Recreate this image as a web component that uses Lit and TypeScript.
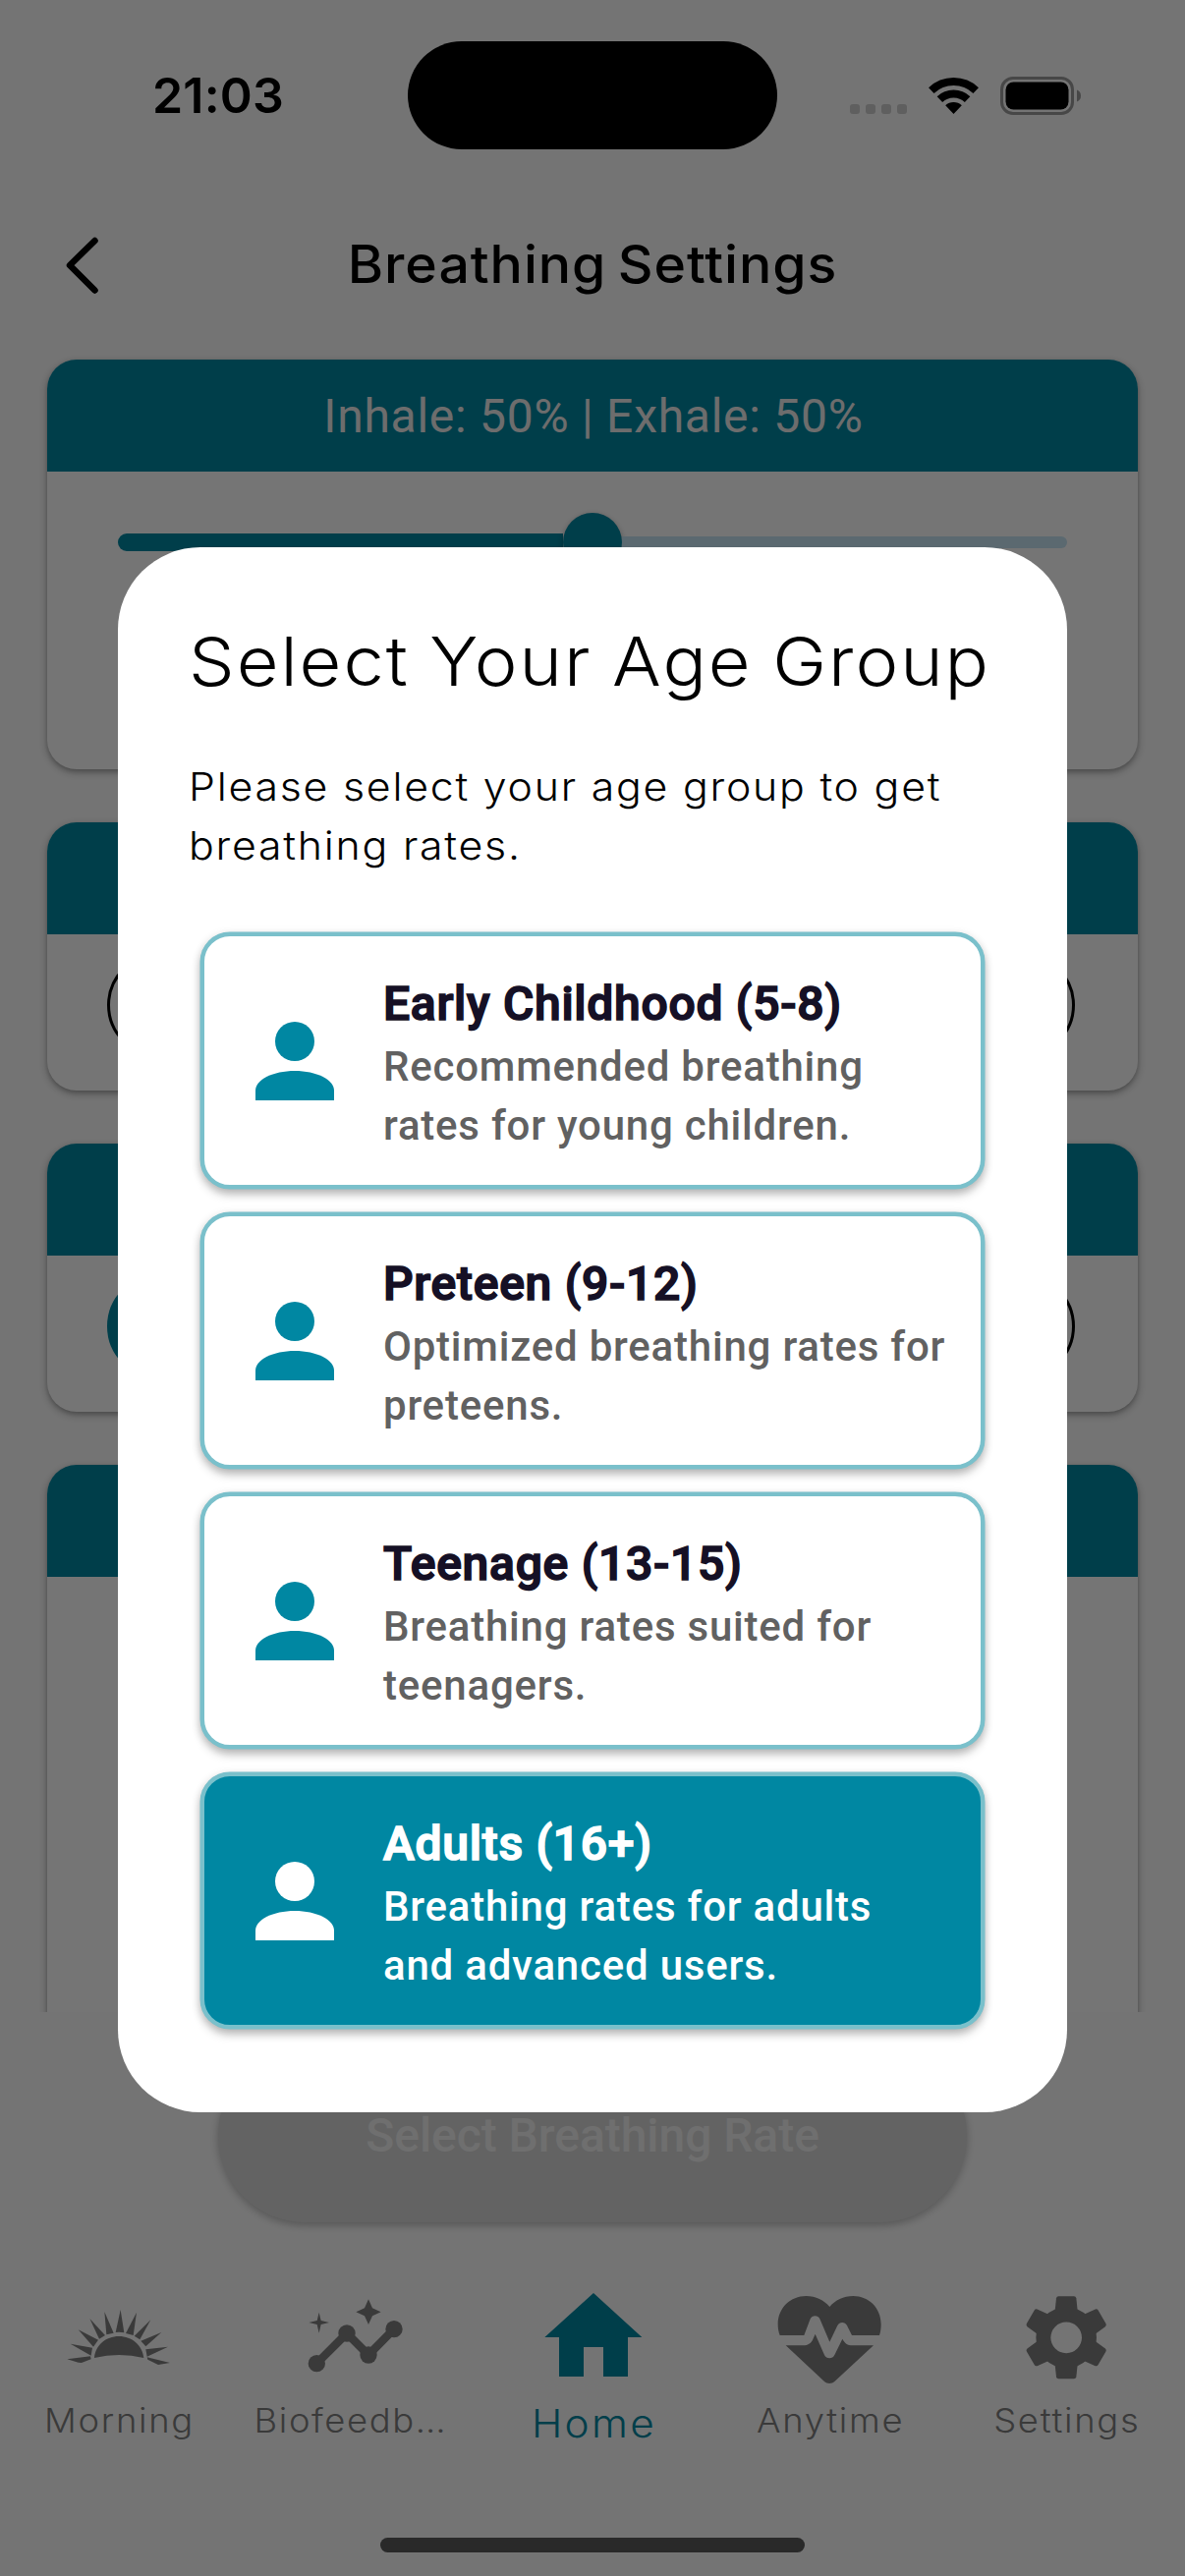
import { LitElement, html, css, svg } from "lit";
import { customElement, state } from "lit/decorators.js";
import { classMap } from "lit/directives/class-map.js";

interface AgeGroup {
  title: string;
  lines: [string, string];
}

const AGE_GROUPS: AgeGroup[] = [
  { title: "Early Childhood (5-8)", lines: ["Recommended breathing", "rates for young children."] },
  { title: "Preteen (9-12)", lines: ["Optimized breathing rates for", "preteens."] },
  { title: "Teenage (13-15)", lines: ["Breathing rates suited for", "teenagers."] },
  { title: "Adults (16+)", lines: ["Breathing rates for adults", "and advanced users."] },
];

const sunrise = svg`
  <path d="M137 210C140 172 172 144 212 144C252 144 284 172 288 210Q212 192 137 210Z"/>
  <path d="M54 214L125 205L127 214L98 225L88 224Z"/>
  <path d="M64 167L131 179L127 203Z"/>
  <path d="M88 124L149 155L134 176Z"/>
  <path d="M123 90L170 141L152 152Z"/>
  <path d="M168 69L196 134L174 139Z"/>
  <path d="M217 63L228 133Q215 130 202 132Z"/>
  <path d="M266 71L256 141L233 135Z"/>
  <path d="M309 94L276 154L259 143Z"/>
  <path d="M342 132L294 175L279 158Z"/>
  <path d="M362 176L298 206L294 184Z"/>
  <path d="M298 208L368 225L332 231L300 215Z"/>`;

const insights = svg`
  <path d="M816 227L908 135L974 201L1052 122" fill="none" stroke="currentColor" stroke-width="25"/>
  <circle cx="816" cy="227" r="26"/><circle cx="908" cy="135" r="26"/>
  <circle cx="974" cy="201" r="26"/><circle cx="1052" cy="122" r="26"/>
  <path d="M823 71L829 96L854 102L829 108L823 134L817 108L792 102L817 96Z"/>
  <path d="M974 31L986 58L1012 70L986 82L974 108L962 82L936 70L962 58Z"/>`;

const home = svg`<path d="M183 12L331 147H288V267H213V177H153V267H78V147H34Z"/>`;

const heartPulse = svg`
  <path d="M72 156C68 146 66 135 66 122C66 72 105 36 152 36C182 36 207 49 224 69C241 49 266 36 296 36C343 36 381 72 381 122C381 135 379 147 376 156H292L277 126C271 114 254 114 248 126L224 176L194 106C189 94 170 94 165 106L146 156Z"/>
  <path d="M90 187H142C160 187 168 178 172 170L180 152L208 216C214 229 233 229 239 216L263 167C270 180 278 187 294 187H358L240 296C230 305 217 305 207 296Z"/>`;

const gear = svg`
  <circle cx="946.5" cy="163" r="70" fill="none" stroke="currentColor" stroke-width="45"/>
  ${[0, 60, 120, 180, 240, 300].map(
    (a) => svg`<path transform="rotate(${a} 946.5 163)" d="M911 90L916 43Q917 37 923 37H970Q976 37 977 43L982 90Z"/>`
  )}`;

const NAV = [
  { label: "Morning", box: "32 0 360 330", icon: sunrise },
  { label: "Biofeedb…", box: "755 0 360 330", icon: insights, cut: true },
  { label: "Home", box: "0 0 360 330", icon: home, active: true },
  { label: "Anytime", box: "43 15 360 330", icon: heartPulse },
  { label: "Settings", box: "766 15 360 330", icon: gear },
];

@customElement("status-bar")
class StatusBar extends LitElement {
  static styles = css`
    :host {
      display: grid;
      grid-template-columns: 415px 376px 415px;
      align-items: center;
      height: 194px;
      color: #000;
    }
    .time {
      padding-left: 155px;
      font: 600 50px/60px Inter, sans-serif;
      letter-spacing: 0.2px;
    }
    .island { height: 110px; border-radius: 55px; background: #000; }
    .right { display: flex; align-items: center; padding-left: 74px; }
    .dots { display: flex; gap: 6px; margin-top: 28px; }
    .dots i { width: 10px; height: 10px; border-radius: 3px; background: #cfcfcf; }
    .wifi { margin-left: 22px; }
    .battery { margin-left: 22px; }
  `;
  render() {
    return html`
      <span class="time">21:03</span>
      <div class="island"></div>
      <div class="right">
        <div class="dots"><i></i><i></i><i></i><i></i></div>
        <svg class="wifi" width="51" height="37" viewBox="0 0 51 37">
          <path d="M2.8 13.1A33 33 0 0 1 48.2 13.1M11.4 22.1A20.5 20.5 0 0 1 39.6 22.1" fill="none" stroke="#000" stroke-width="8"/>
          <path d="M17.2 28.3A12 12 0 0 1 33.8 28.3L25.5 37Z"/>
        </svg>
        <svg class="battery" width="83" height="39" viewBox="0 0 83 39">
          <rect x="1.5" y="1.5" width="72" height="36" rx="11.5" fill="none" stroke="#9c9c9c" stroke-width="3"/>
          <rect x="5.5" y="5.5" width="64" height="28" rx="8"/>
          <path d="M78 13.5Q82 15 82 19.5T78 25.5Z" fill="#9c9c9c"/>
        </svg>
      </div>`;
  }
}

@customElement("settings-card")
class SettingsCard extends LitElement {
  static properties = { heading: {} };
  declare heading: string;
  static styles = css`
    :host {
      display: block;
      box-sizing: border-box;
      flex: none;
      border-radius: 30px;
      background: #fff;
      box-shadow: 0 3px 8px rgba(0, 0, 0, 0.3), 0 2px 4px rgba(0, 0, 0, 0.14);
    }
    .head {
      box-sizing: border-box;
      height: 114px;
      padding: 1px 0 0 2px;
      border-radius: 30px 30px 0 0;
      background: #0087a2;
      color: #eee;
      font: 400 48px/114px Roboto, sans-serif;
      letter-spacing: 0.74px;
      text-align: center;
    }
  `;
  render() {
    return html`<div class="head">${this.heading}</div><slot></slot>`;
  }
}

@customElement("age-dialog")
class AgeDialog extends LitElement {
  @state() private selected = 3;
  static styles = css`
    :host {
      display: block;
      box-sizing: border-box;
      width: 966px;
      height: 1593px;
      padding: 72px 84px 0;
      border-radius: 84px;
      background: #fff;
      color: #000;
    }
    .title, .body {
      width: max-content;
      margin: 0 -12px;
      transform: scaleX(1.07);
      transform-origin: 0 0;
      white-space: nowrap;
    }
    .title {
      font: 320 69px/88px Inter, sans-serif;
      letter-spacing: 1.85px;
      word-spacing: -2px;
    }
    .body { margin-top: 54.5px; font: 300 40px/60px Inter, sans-serif; letter-spacing: 1.66px; }
    .list { display: flex; flex-direction: column; gap: 24px; margin-top: 58px; }
    .option {
      display: flex;
      gap: 30px;
      box-sizing: border-box;
      height: 261px;
      padding: 0 0 0 32px;
      border: 4px solid #7ac0cb;
      border-radius: 30px;
      background: #fff;
      color: #616161;
      box-shadow: 0 0 0 0.5px #7ac0cb, 0 6px 10px rgba(0, 0, 0, 0.22), 0 2px 10px rgba(0, 0, 0, 0.14);
    }
    .person { flex: none; margin-top: 67px; color: #0087a2; }
    .text { padding-top: 33.5px; }
    .name {
      color: #151025;
      font: 500 48px/69px Roboto, sans-serif;
      letter-spacing: 0.72px;
      -webkit-text-stroke: 1.6px currentColor;
    }
    .desc { font: 500 42px/60px Roboto, sans-serif; letter-spacing: 0.78px; white-space: nowrap; }
    .selected { background: #0087a2; color: #fff; }
    .selected .name, .selected .person { color: #fff; }
  `;
  render() {
    return html`
      <div class="title">Select Your Age Group</div>
      <div class="body">Please select your age group to get<br />breathing rates.</div>
      <div class="list">
        ${AGE_GROUPS.map(
          (g, i) => html`
            <div class=${classMap({ option: true, selected: i === this.selected })} @click=${() => (this.selected = i)}>
              <svg class="person" width="120" height="120" viewBox="0 0 24 24" fill="currentColor">
                <circle cx="12" cy="8" r="4"/>
                <path d="M12 14c-4.42 0-8 1.79-8 4v2h16v-2c0-2.21-3.58-4-8-4z"/>
              </svg>
              <div class="text">
                <div class="name">${g.title}</div>
                <div class="desc">${g.lines[0]}<br />${g.lines[1]}</div>
              </div>
            </div>`
        )}
      </div>`;
  }
}

@customElement("app-root")
export class AppRoot extends LitElement {
  static styles = css`
    :host {
      display: block;
      position: relative;
      width: 1206px;
      height: 2622px;
      overflow: hidden;
      background: #fdfdfd;
      font-family: Roboto, sans-serif;
    }
    .screen { display: flex; flex-direction: column; height: 100%; }
    .header {
      display: grid;
      grid-template-columns: 130px 1fr 130px;
      align-items: center;
      flex: none;
      height: 151px;
    }
    .back { margin-left: 64px; }
    .page-title {
      padding-bottom: 2px;
      text-align: center;
      font: 500 53px/68px Inter, sans-serif;
      letter-spacing: 0.9px;
      word-spacing: -4px;
      transform: scaleX(1.045);
    }
    .cards {
      display: flex;
      flex-direction: column;
      gap: 54px;
      flex: none;
      box-sizing: border-box;
      height: 1703px;
      padding: 21px 48px 0;
      overflow: hidden;
    }
    .tall { height: 417px; }
    .short { height: 273px; }
    .long { height: 700px; }
    .slider { display: flex; align-items: center; height: 60px; margin: 42px 72px 0; }
    .active-track { width: 453px; height: 18px; border-radius: 9px 0 0 9px; background: #0087a2; }
    .thumb {
      width: 60px;
      height: 60px;
      border-radius: 50%;
      background: #0087a2;
      box-shadow: 0 2px 6px rgba(0, 0, 0, 0.3);
    }
    .rest-track { flex: 1; height: 12px; border-radius: 0 6px 6px 0; background: #c6e4f3; }
    .chips { display: flex; justify-content: space-between; padding: 19px 64.5px 0 60.5px; }
    .chip { box-sizing: border-box; width: 106px; height: 106px; border: 3px solid #000; border-radius: 50%; }
    .on { border-color: #0087a2; background: #0087a2; }
    .cta {
      flex: none;
      align-self: center;
      width: 762px;
      height: 177px;
      margin-top: 37px;
      border-radius: 89px;
      background: #d8d8d8;
      color: #f1f1f1;
      font: 500 48px/178px Roboto, sans-serif;
      letter-spacing: -0.05px;
      text-align: center;
      box-shadow: 0 3px 8px rgba(0, 0, 0, 0.26);
    }
    .nav { display: grid; grid-template-columns: repeat(5, 1fr); margin-top: 68px; }
    .tab { display: flex; flex-direction: column; align-items: center; color: #7f7f7f; }
    .label {
      margin-top: 1.5px;
      text-indent: 1px;
      font: 300 34px/44px Inter, sans-serif;
      letter-spacing: 1.6px;
      transform: scaleX(1.07);
    }
    .cut .label { margin-right: 11px; letter-spacing: 1.5px; }
    .current { color: #0087a2; }
    .current .label { margin-top: 5px; text-indent: 3px; font-size: 39.5px; letter-spacing: 2.2px; }
    .indicator { width: 432px; height: 15px; margin: auto auto 24px; border-radius: 8px; background: #595959; }
    .scrim {
      position: absolute;
      inset: 0;
      display: flex;
      justify-content: center;
      align-items: flex-start;
      box-sizing: border-box;
      padding-top: 556.5px;
      background: rgba(0, 0, 0, 0.54);
    }
  `;
  render() {
    return html`
      <div class="screen">
        <status-bar></status-bar>
        <div class="header">
          <svg class="back" width="40" height="62" viewBox="0 0 40 62" fill="none" stroke="#000" stroke-width="6.5" stroke-linecap="round" stroke-linejoin="round">
            <path d="M32.5 6L7 31L32.5 56.500"/>
          </svg>
          <div class="page-title">Breathing Settings</div>
        </div>
        <div class="cards">
          <settings-card class="tall" heading="Inhale: 50% | Exhale: 50%">
            <div class="slider">
              <div class="active-track"></div>
              <div class="thumb"></div>
              <div class="rest-track"></div>
            </div>
          </settings-card>
          <settings-card class="short">
            <div class="chips"><div class="chip"></div><div class="chip"></div></div>
          </settings-card>
          <settings-card class="short">
            <div class="chips"><div class="chip on"></div><div class="chip"></div></div>
          </settings-card>
          <settings-card class="long"></settings-card>
        </div>
        <div class="cta">Select Breathing Rate</div>
        <div class="nav">
          ${NAV.map(
            (n) => html`
              <div class=${classMap({ tab: true, current: !!n.active, cut: !!n.cut })}>
                <svg width="120" height="110" viewBox=${n.box} fill="currentColor">${n.icon}</svg>
                <div class="label">${n.label}</div>
              </div>`
          )}
        </div>
        <div class="indicator"></div>
      </div>
      <div class="scrim"><age-dialog></age-dialog></div>`;
  }
}
